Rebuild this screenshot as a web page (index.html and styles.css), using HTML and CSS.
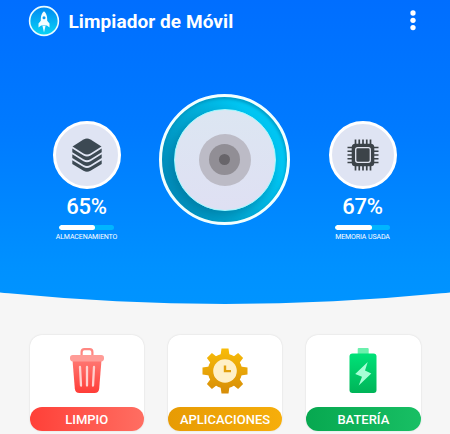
FILE: index.html
```html
<!DOCTYPE html>
<html lang="es">
<head>
<meta charset="utf-8">
<title>Limpiador de Móvil</title>
<link rel="stylesheet" href="styles.css">
</head>
<body>
<main class="app">
  <section class="hero">
    <header class="topbar">
      <svg class="logo" viewBox="0 0 32 32">
        <defs><linearGradient id="lg" x1="0" y1="0" x2="0" y2="1"><stop offset="0" stop-color="#0088f2"/><stop offset="1" stop-color="#08d5f5"/></linearGradient></defs>
        <circle cx="16" cy="16" r="14.4" fill="url(#lg)" stroke="#e9fbff" stroke-width="1.6"/>
        <path d="M16 6.3c2.2 2 3.2 4.600 3.200 7.700v1.700l2.300 2.700v4.200l-2.600-2.200h-5.800l-2.600 2.200v-4.200l2.300-2.700V14c0-3.100 1-5.700 3.200-7.700z" fill="#f4fdff"/>
        <circle cx="16" cy="12.700" r="1.500" fill="#079df4"/>
        <path d="M14.500 21h3L16 27.500z" fill="#f4fdff"/>
      </svg>
      <h1 class="title">Limpiador de Móvil</h1>
      <svg class="more" viewBox="0 0 6 21"><g fill="#fff"><circle cx="3" cy="3" r="2.650"/><circle cx="3" cy="10.300" r="2.650"/><circle cx="3" cy="17.600" r="2.650"/></g></svg>
    </header>
    <div class="gauges">
      <div class="stat">
        <div class="disc">
          <svg class="stat-icon" viewBox="0 0 32 34" fill="#3c4953">
            <path d="M12.500 1.600Q16-.5 19.500 1.600L30.500 8.500L19.500 15.400Q16 17.500 12.500 15.400L1.500 8.500z"/>
            <path id="layer" d="M1.300 10.500L12.500 17.500Q16 19.500 19.500 17.500L30.700 10.500V14.300L19.500 21.300Q16 23.300 12.500 21.300L1.300 14.300z"/>
            <use href="#layer" y="5.800"/>
            <path d="M1.300 22.300L12.500 29Q16 31 19.500 29L30.700 22.300V26L19.500 32.700Q16 34.700 12.500 32.700L1.300 26z"/>
          </svg>
        </div>
        <div class="percent">65%</div>
        <div class="bar"><div class="fill" style="width:65%"></div></div>
        <div class="label storage">ALMACENAMIENTO</div>
      </div>
      <div class="dial"><div class="knob"><div class="halo"><div class="core"><div class="dot"></div></div></div></div></div>
      <div class="stat">
        <div class="disc">
          <svg class="stat-icon" viewBox="0 0 32 32">
            <path d="M8.500 .5v31M12.250 .5v31M16 .5v31M19.750 .5v31M23.500 .5v31M.5 8.500h31M.5 12.250h31M.5 16h31M.5 19.750h31M.5 23.500h31" stroke="#3c4349" stroke-width="1.700"/>
            <rect x="4.700" y="4.700" width="22.600" height="22.600" rx="3.500" fill="#3c4349"/>
            <rect x="8.700" y="8.700" width="14.600" height="14.600" rx="2" fill="#3c4349" stroke="#e3e6f2" stroke-width="1.300"/>
          </svg>
        </div>
        <div class="percent">67%</div>
        <div class="bar"><div class="fill" style="width:67%"></div></div>
        <div class="label memory">MEMORIA USADA</div>
      </div>
    </div>
  </section>
  <nav class="cards">
    <div class="card">
      <svg class="card-icon" viewBox="0 0 46 46">
        <defs><linearGradient id="red" x1="0" y1="0" x2="0" y2="1"><stop offset="0" stop-color="#ff7772"/><stop offset="1" stop-color="#ff3d37"/></linearGradient></defs>
        <path d="M8.500 12h29l-2.300 28.500Q34.800 45 30.500 45h-15Q11.200 45 10.800 40.500z" fill="url(#red)"/>
        <path d="M17.600 8V4Q17.600 1.200 20.400 1.200h5.200q2.800 0 2.800 2.800v4" fill="none" stroke="#ff8782" stroke-width="2.200"/>
        <rect x="6" y="7" width="34" height="6.400" rx="2.800" fill="#ff9c97"/>
        <path d="M16 19l1 18.500M23 19v18.500M30 19l-1 18.500" stroke="#ffd0cd" stroke-width="2.300" stroke-linecap="round"/>
      </svg>
      <div class="action clean">LIMPIO</div>
    </div>
    <div class="card">
      <svg class="card-icon" viewBox="0 0 46 46">
        <defs><linearGradient id="gold" gradientUnits="userSpaceOnUse" x1="0" y1="0" x2="0" y2="46"><stop offset="0" stop-color="#f9bd08"/><stop offset="1" stop-color="#d68c08"/></linearGradient></defs>
        <g fill="url(#gold)">
          <circle cx="23" cy="23" r="17.200"/>
          <path d="M19.500.500h7l1 7h-9zM19.500 45.500h7l1-7h-9zM.5 19.500v7l7 1v-9zM45.500 19.500v7l-7 1v-9z"/>
          <path d="M4.900 10.100l5-5 6.300 4.800-6.500 6.500zM41.100 10.100l-5-5-6.300 4.800 6.500 6.500zM4.900 35.900l5 5 6.300-4.800-6.500-6.500zM41.100 35.900l-5 5-6.300-4.800 6.500-6.500z"/>
        </g>
        <circle cx="23" cy="23" r="11.800" fill="#fff0c7"/>
        <path d="M23 17.500v5.600h6" fill="none" stroke="#e2a00c" stroke-width="2.400"/>
      </svg>
      <div class="action apps">APLICACIONES</div>
    </div>
    <div class="card">
      <svg class="card-icon" viewBox="0 0 46 46">
        <defs><linearGradient id="green" x1="0" y1="0" x2="0" y2="1"><stop offset="0" stop-color="#00e278"/><stop offset="1" stop-color="#00b458"/></linearGradient></defs>
        <rect x="17.700" y="0" width="11" height="7" rx="1" fill="#6bf0ad"/>
        <rect x="9.500" y="5.500" width="27" height="39.500" rx="3" fill="url(#green)"/>
        <path d="M27.700 14L15.200 26l6.800 2.700-3.300 8.800L31.300 25.500 25 22.600z" fill="#a6ffd6"/>
      </svg>
      <div class="action battery">BATERÍA</div>
    </div>
  </nav>
</main>
</body>
</html>
```
FILE: styles.css
```css
* { box-sizing: border-box; }
body { margin: 0; background: #f6f6f6; font-family: Roboto, "Liberation Sans", sans-serif; }
.app { width: 450px; height: 434px; overflow: hidden; }
.hero { height: 304px; color: #fff; background: linear-gradient(#006eff 0%, #007aff 42%, #0091ff 88%, #0094ff 100%); clip-path: circle(2207px at 225px -1903px); }
.topbar { height: 41px; padding: 0 34px 0 28px; display: flex; align-items: center; }
.logo { width: 32px; height: 32px; }
.title { margin: 2px auto 0 8.500px; font-size: 19px; line-height: 24px; font-weight: 700; letter-spacing: .08px; white-space: nowrap; }
.more { width: 6px; height: 21px; }
.gauges { display: grid; grid-template-columns: 70px 131px 70px; justify-content: space-between; padding: 0 52.500px 0 51.500px; }
.stat { padding-top: 80px; display: flex; flex-direction: column; align-items: center; }
.disc { width: 68px; height: 68px; border: 3.500px solid #fff; border-radius: 50%; background: #dfe4f3; display: grid; place-items: center; }
.stat-icon { width: 32px; height: 34px; }
.percent { margin-top: 5px; font-size: 22px; line-height: 25px; font-weight: 500; letter-spacing: -.25px; }
.bar { width: 55px; height: 5px; margin-top: 6px; border-radius: 3px; background: #00b5ff; overflow: hidden; }
.fill { height: 100%; border-radius: 3px; background: #fff; }
.label { margin-top: 3px; font-size: 7px; line-height: 8px; font-weight: 400; white-space: nowrap; }
.storage { letter-spacing: -.1px; }
.memory { letter-spacing: -.1px; }
.dial { width: 131px; height: 131px; margin-top: 53px; border: 3px solid #f2ffff; border-radius: 50%; background: linear-gradient(60deg, #0081b0, #00a5d0 40%, #00c6f3 75%); box-shadow: inset -1px 2px 3px #007fa999; display: grid; place-items: center; }
.knob { width: 102px; height: 102px; border: 1.500px solid #a4faff; border-radius: 50%; background: linear-gradient(#dce6f2, #dfe0f3); box-shadow: -3px 4px 8px #005e8266; display: grid; place-items: center; }
.halo, .core, .dot { border-radius: 50%; display: grid; place-items: center; }
.halo { width: 52px; height: 52px; background: #bcbbc6; }
.core { width: 31px; height: 31px; background: #918e95; }
.dot { width: 11px; height: 11px; background: #68656a; }
.cards { display: grid; grid-template-columns: repeat(3, 114.500px); column-gap: 23.800px; padding: 30.500px 0 0 29.500px; }
.card { height: 96.500px; border-radius: 12px; background: #fff; box-shadow: 0 0 2px #0002; display: flex; flex-direction: column; align-items: center; justify-content: space-between; padding-top: 13.500px; }
.card-icon { width: 46px; height: 46px; }
.action { width: 100%; height: 24px; border-radius: 12px; color: #fff; font-size: 13px; line-height: 25px; font-weight: 500; text-align: center; }
.clean { background: linear-gradient(90deg, #ff4038, #ff6e62); }
.apps { background: linear-gradient(90deg, #e79b04, #f6ae0b); }
.battery { background: linear-gradient(90deg, #07a850, #18bf64); }
```
